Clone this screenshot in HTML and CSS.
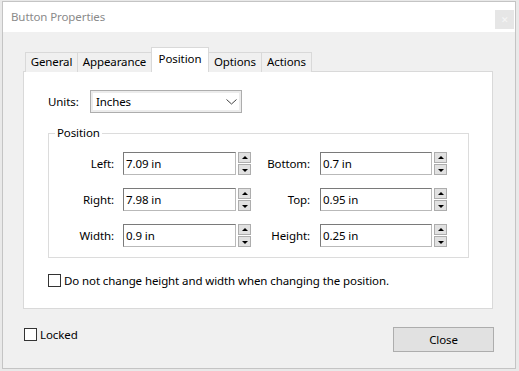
FILE: index.html
```html
<!DOCTYPE html>
<html lang="en">
<head>
    <meta charset="UTF-8">
    <meta name="viewport" content="width=device-width, initial-scale=1.0">
    <title>Button Properties</title>
    <link rel="stylesheet" href="styles.css">
</head>
<body>
    <div class="dialog">
        <div class="titlebar">
            <span class="title">Button Properties</span>
            <span class="close-x">&#x2715;</span>
        </div>

        <div class="content">
            <div class="tabs">
                <div class="tab t-general">General</div>
                <div class="tab t-appearance">Appearance</div>
                <div class="tab t-position active">Position</div>
                <div class="tab t-options">Options</div>
                <div class="tab t-actions">Actions</div>
            </div>

            <div class="panel">
                <div class="units-row">
                    <span class="units-label">Units:</span>
                    <div class="select">
                        <span class="select-value">Inches</span>
                        <svg class="chevron" width="11" height="6" viewBox="0 0 11 6"><polyline points="0.5,0.5 5.5,5 10.5,0.5" fill="none" stroke="#444" stroke-width="1"/></svg>
                    </div>
                </div>

                <fieldset class="group">
                    <legend>Position</legend>
                    <div class="field-row">
                        <label class="lbl lbl-a">Left:</label>
                        <div class="input in-a">7.09 in</div>
                        <div class="spin"><span class="up"></span><span class="down"></span></div>
                        <label class="lbl lbl-b">Bottom:</label>
                        <div class="input in-b">0.7 in</div>
                        <div class="spin"><span class="up"></span><span class="down"></span></div>
                    </div>
                    <div class="field-row">
                        <label class="lbl lbl-a">Right:</label>
                        <div class="input in-a">7.98 in</div>
                        <div class="spin"><span class="up"></span><span class="down"></span></div>
                        <label class="lbl lbl-b">Top:</label>
                        <div class="input in-b">0.95 in</div>
                        <div class="spin"><span class="up"></span><span class="down"></span></div>
                    </div>
                    <div class="field-row">
                        <label class="lbl lbl-a">Width:</label>
                        <div class="input in-a">0.9 in</div>
                        <div class="spin"><span class="up"></span><span class="down"></span></div>
                        <label class="lbl lbl-b">Height:</label>
                        <div class="input in-b">0.25 in</div>
                        <div class="spin"><span class="up"></span><span class="down"></span></div>
                    </div>
                </fieldset>

                <div class="check-row keep">
                    <span class="box"></span>
                    <span>Do not change height and width when changing the position.</span>
                </div>
            </div>

            <div class="footer">
                <div class="check-row">
                    <span class="box"></span>
                    <span>Locked</span>
                </div>
                <button class="close-btn">Close</button>
            </div>
        </div>
    </div>
</body>
</html>
```

FILE: styles.css
```css
body {
    margin: 0;
    padding: 0;
    background-color: #e9e9e9;
    font-family: "Noto Sans", "Open Sans", sans-serif;
    font-size: 11.5px;
    letter-spacing: -0.1px;
    color: #000000;
    width: 519px;
    height: 371px;
    overflow: hidden;
}
.dialog {
    margin: 1px 0 0 2px;
    width: 512px;
    height: 366px;
    border: 1px solid #c4c4c4;
    background: #f0f0f0;
    display: flex;
    flex-direction: column;
}
.titlebar {
    height: 30px;
    background: #ffffff;
    display: flex;
    align-items: center;
    justify-content: space-between;
}
.title {
    margin-left: 8px;
    margin-top: -2px;
    color: #8a8a8a;
}
.close-x {
    width: 19px;
    height: 19px;
    margin-top: 4px;
    margin-right: 1px;
    background: #e6e6e6;
    color: #f6f6f6;
    font-size: 9px;
    display: flex;
    align-items: center;
    justify-content: center;
}
.content {
    flex: 1;
    padding: 17px 0 0 20px;
    display: flex;
    flex-direction: column;
}
.tabs {
    display: flex;
    align-items: flex-end;
    margin-left: 2px;
    height: 23px;
    margin-bottom: -1px;
    position: relative;
}
.tab {
    height: 18px;
    border: 1px solid #d9d9d9;
    border-bottom: none;
    border-right: none;
    background: #f0f0f0;
    display: flex;
    align-items: center;
    justify-content: center;
    line-height: 1;
    padding-bottom: 1px;
}
.t-general { width: 51px; }
.t-appearance { width: 73px; }
.t-position { width: 56px; }
.t-options { width: 52px; }
.t-actions { width: 49px; border-right: 1px solid #d9d9d9; }
.tab.active {
    height: 22px;
    background: #ffffff;
    border-right: 1px solid #d9d9d9;
    padding-bottom: 2px;
    z-index: 1;
}
.tab.active + .tab {
    border-left: none;
}
.panel {
    width: 444px;
    height: 218px;
    background: #ffffff;
    border: 1px solid #d9d9d9;
    padding: 18px 0 0 24px;
}
.units-row {
    display: flex;
    align-items: center;
    height: 23px;
}
.units-label {
    width: 42px;
}
.select {
    width: 150px;
    height: 21px;
    border: 1px solid #adadad;
    background: #ffffff;
    box-shadow: inset 0 0 0 2px #ececec;
    display: flex;
    align-items: center;
    justify-content: space-between;
    box-sizing: content-box;
}
.select-value {
    margin-left: 5px;
}
.chevron {
    margin-right: 4px;
}
.group {
    margin: 12px 0 0 0;
    width: 421px;
    border: 1px solid #dcdcdc;
    padding: 11px 0 10px 0;
    box-sizing: border-box;
}
.group legend {
    margin-left: 6px;
    padding: 0 2px;
    line-height: 16px;
}
.field-row {
    display: flex;
    align-items: center;
    height: 23px;
    margin-bottom: 13px;
}
.field-row:last-child {
    margin-bottom: 0;
}
.lbl {
    text-align: right;
}
.lbl-a { width: 65px; margin-right: 9px; }
.lbl-b { width: 59px; margin-right: 10px; }
.input {
    height: 21px;
    border: 1px solid #7a7a7a;
    border-color: #7a7a7a #b9b9b9 #b9b9b9 #7a7a7a;
    padding-left: 2px;
    display: flex;
    align-items: center;
    box-sizing: content-box;
}
.in-a { width: 109px; }
.in-b { width: 108px; }
.spin {
    margin-left: 2px;
    width: 13px;
    height: 23px;
    display: flex;
    flex-direction: column;
    gap: 1px;
}
.spin span {
    flex: 1;
    border: 1px solid #adadad;
    background: #e1e1e1;
    position: relative;
}
.spin .up::after,
.spin .down::after {
    content: "";
    position: absolute;
    left: 3px;
    top: 3px;
    border-left: 3px solid transparent;
    border-right: 3px solid transparent;
}
.spin .up::after {
    border-bottom: 3px solid #000000;
}
.spin .down::after {
    border-top: 3px solid #000000;
    top: 4px;
}
.check-row {
    display: flex;
    align-items: center;
    gap: 3px;
}
.keep {
    margin-top: 15px;
}
.box {
    width: 11px;
    height: 11px;
    border: 1px solid #333333;
    background: #ffffff;
}
.footer {
    display: flex;
    align-items: flex-start;
    justify-content: space-between;
    width: 470px;
    margin-left: 1px;
    margin-top: 18px;
}
.close-btn {
    width: 101px;
    height: 25px;
    background: #e1e1e1;
    border: 1px solid #adadad;
    font-family: "Noto Sans", "Open Sans", sans-serif;
    font-size: 11.5px;
    letter-spacing: -0.1px;
    color: #000000;
    padding: 0;
}
```
